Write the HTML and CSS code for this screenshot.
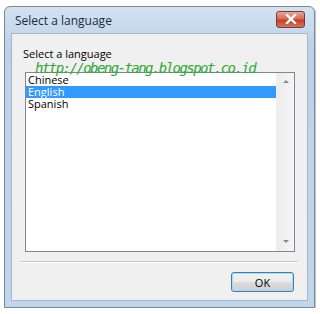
FILE: index.html
```html
<!DOCTYPE html>
<html lang="en">
    <head>
        <meta charset="UTF-8" />
        <title>Select a language</title>
        <link rel="stylesheet" href="styles.css">
    </head>
    <body>
        <div class="window">
            <div class="titlebar">
                <span class="title">Select a language</span>
                <button class="close-btn">
                    <svg width="12" height="10" viewBox="0 0 12 10">
                        <path d="M2 1 L10 9 M10 1 L2 9" stroke="#fff" stroke-width="2.4" stroke-linecap="square"/>
                    </svg>
                </button>
            </div>
            <div class="client">
                <div class="label">Select a language</div>
                <div class="listbox">
                    <div class="items">
                        <div class="item">Chinese</div>
                        <div class="item selected">English</div>
                        <div class="item">Spanish</div>
                    </div>
                    <div class="scrollbar">
                        <span class="arrow up"></span>
                        <span class="arrow down"></span>
                    </div>
                    <div class="watermark">http://obeng-tang.blogspot.co.id</div>
                </div>
                <div class="separator"></div>
                <div class="footer">
                    <button class="ok-btn">OK</button>
                </div>
            </div>
        </div>
    </body>
</html>
```

FILE: styles.css
```css
body {
    margin: 0;
    background: #fff;
    font-family: "Open Sans", "DejaVu Sans", sans-serif;
    font-size: 11px;
    color: #000;
}

.window {
    margin: 6px 0 0 4px;
    width: 309px;
    height: 300px;
    border: 1px solid #7a8795;
    border-radius: 6px 6px 0 0;
    background: linear-gradient(#d3e2f2, #bcd2ea 40px, #c0d6ed);
    display: flex;
    flex-direction: column;
    box-shadow: 1px 1px 1px rgba(0, 0, 0, 0.25);
}

.titlebar {
    height: 26px;
    display: flex;
    align-items: center;
    justify-content: space-between;
    padding: 0 9px 0 10px;
}

.title {
    font-size: 12px;
    color: #1e2a3a;
    margin-top: 1px;
}

.close-btn {
    width: 29px;
    height: 17px;
    margin-top: -2px;
    border: 1px solid #7a3a30;
    border-radius: 3px;
    background: linear-gradient(#e9a99b, #d66a55 45%, #c2402a 55%, #d6735c);
    display: flex;
    align-items: center;
    justify-content: center;
    padding: 0;
}

.client {
    flex: 1;
    margin: 0 6px 6px 6px;
    background: #f0f0f0;
    border: 1px solid #a4b7cd;
    display: flex;
    flex-direction: column;
}

.label {
    margin: 12px 0 0 11px;
    height: 16px;
}

.listbox {
    position: relative;
    margin: 10px 12px 0 13px;
    height: 178px;
    border: 1px solid #828790;
    background: #fff;
    display: flex;
}

.items {
    flex: 1;
    padding-top: 1px;
}

.item {
    height: 12px;
    line-height: 12px;
    padding-left: 2px;
}

.item.selected {
    background: #3399ff;
    color: #fff;
}

.scrollbar {
    width: 17px;
    background: linear-gradient(90deg, #ececec, #f6f6f6);
    border-left: 1px solid #efefef;
    display: flex;
    flex-direction: column;
    justify-content: space-between;
    align-items: center;
    padding: 7px 0 8px;
}

.arrow {
    width: 0;
    height: 0;
    border-left: 3px solid transparent;
    border-right: 3px solid transparent;
}

.arrow.up {
    border-bottom: 3px solid #8a8a8a;
}

.arrow.down {
    border-top: 3px solid #8a8a8a;
}

.watermark {
    position: absolute;
    left: 9px;
    top: -13px;
    font-family: "DejaVu Sans Mono", monospace;
    font-style: italic;
    font-size: 14px;
    letter-spacing: -1.55px;
    color: #2fa836;
    white-space: nowrap;
}

.separator {
    margin: 9px 9px 0 8px;
    height: 0;
    border-top: 1px solid #c8c8c8;
    border-bottom: 1px solid #fff;
}

.footer {
    display: flex;
    justify-content: flex-end;
    padding: 9px 13px 0 0;
}

.ok-btn {
    width: 63px;
    height: 20px;
    border: 1px solid #3c7fb1;
    border-radius: 3px;
    background: linear-gradient(#f2f2f2, #ebebeb 50%, #dddddd 50%, #cfcfcf);
    box-shadow: inset 0 0 0 1px #a8dcf5;
    font-family: "Open Sans", "DejaVu Sans", sans-serif;
    font-size: 11px;
    color: #000;
    padding: 0;
}
```
